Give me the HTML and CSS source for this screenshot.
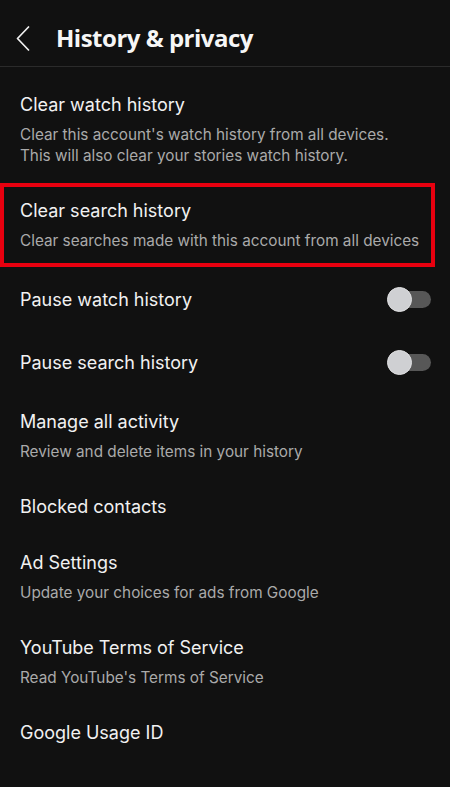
FILE: index.html
```
<!DOCTYPE html>
<html lang="en">
<head>
<meta charset="utf-8">
<title>History &amp; privacy</title>
<link rel="stylesheet" href="styles.css">
</head>
<body>
<header class="topbar">
  <svg class="back" width="14" height="25" viewBox="0 0 14 25" aria-hidden="true">
    <path d="M12.5 1 L1.5 12.5 L12.5 24" fill="none" stroke="#f1f1f1" stroke-width="1.7" stroke-linecap="round" stroke-linejoin="round"/>
  </svg>
  <h1 class="title">History &amp; privacy</h1>
</header>
<main class="list">
  <div class="row">
    <div class="row-title">Clear watch history</div>
    <div class="row-sub">Clear this account's watch history from all devices.<br>This will also clear your stories watch history.</div>
  </div>
  <div class="row highlighted">
    <div class="row-title">Clear search history</div>
    <div class="row-sub">Clear searches made with this account from all devices</div>
  </div>
  <div class="row toggle-row">
    <div class="row-title">Pause watch history</div>
    <span class="switch"><span class="knob"></span></span>
  </div>
  <div class="row toggle-row">
    <div class="row-title">Pause search history</div>
    <span class="switch"><span class="knob"></span></span>
  </div>
  <div class="row">
    <div class="row-title">Manage all activity</div>
    <div class="row-sub">Review and delete items in your history</div>
  </div>
  <div class="row">
    <div class="row-title">Blocked contacts</div>
  </div>
  <div class="row">
    <div class="row-title">Ad Settings</div>
    <div class="row-sub">Update your choices for ads from Google</div>
  </div>
  <div class="row">
    <div class="row-title">YouTube Terms of Service</div>
    <div class="row-sub">Read YouTube's Terms of Service</div>
  </div>
  <div class="row">
    <div class="row-title">Google Usage ID</div>
  </div>
</main>
</body>
</html>
```
FILE: styles.css
```
* { box-sizing: border-box; }
html, body {
  margin: 0;
  padding: 0;
  background: #111111;
}
body {
  width: 450px;
  height: 787px;
  overflow: hidden;
  font-family: Inter, "Liberation Sans", sans-serif;
  color: #f1f1f1;
}
.topbar {
  height: 67px;
  display: flex;
  align-items: center;
  padding: 10px 0 0 16px;
  border-bottom: 1px solid #2b2b2b;
}
.back {
  display: block;
}
.title {
  margin: 0 0 0 26px;
  font-family: "Open Sans", sans-serif;
  font-weight: 700;
  font-size: 24px;
  line-height: 30px;
  letter-spacing: -0.5px;
  color: #f6f6f6;
}
.list {
  padding-top: 10px;
}
.row {
  position: relative;
  padding: 17px 20px;
}
.row-title {
  font-size: 18px;
  line-height: 22px;
  color: #f1f1f1;
}
.row-sub {
  margin-top: 8px;
  font-size: 15.3px;
  line-height: 21px;
  color: #aaaaaa;
}
.highlighted::after {
  content: "";
  position: absolute;
  top: 0;
  bottom: 1px;
  left: 0;
  right: 15px;
  border: 4px solid #e8000f;
  pointer-events: none;
}
.toggle-row {
  height: 63px;
  padding-top: 0;
  padding-bottom: 0;
  display: flex;
  align-items: center;
  justify-content: space-between;
}
.switch {
  position: relative;
  width: 44px;
  height: 25px;
  display: flex;
  align-items: center;
  margin-right: -1px;
}
.switch::before {
  content: "";
  position: absolute;
  left: 6px;
  right: 0;
  top: 4px;
  height: 17px;
  border-radius: 9px;
  background: #575757;
}
.knob {
  position: relative;
  width: 25px;
  height: 25px;
  border-radius: 50%;
  background: #cfd0d3;
  border: 1px solid #e0e0e2;
}
```
